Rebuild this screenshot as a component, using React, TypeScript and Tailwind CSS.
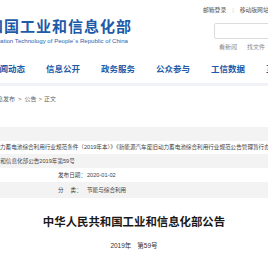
const cjk = "font-['Liberation_Sans','Noto_Sans_CJK_SC',sans-serif]";

const navItems = ["新闻动态", "信息公开", "政务服务", "公众参与", "工信数据", "互动交流"];

function InfoRow({
  gray,
  height,
  children,
}: {
  gray?: boolean;
  height: string;
  children?: React.ReactNode;
}) {
  return (
    <div
      className={`flex items-center whitespace-nowrap text-[5.6px] text-[#444] ${height} ${
        gray ? "bg-[#f3f3f3]" : "bg-white"
      }`}
    >
      {children}
    </div>
  );
}

export default function App() {
  return (
    <div className={`w-[268px] h-[273px] overflow-hidden bg-white ${cjk}`}>
      {/* header */}
      <header className="flex h-[54px]">
        <div className="w-[132px] shrink-0 pt-[19px]">
          <div className="flex justify-end whitespace-nowrap text-[15px] leading-[16px] font-bold tracking-[1px] text-[#1d5aa7]">
            中华人民共和国工业和信息化部
          </div>
          <div className="mt-[1.5px] flex justify-end pr-[4px] whitespace-nowrap text-[6.1px] leading-[8px] text-[#2a64ad]">
            Ministry of Industry and Information Technology of People´s Republic of China
          </div>
        </div>
        <div className="ml-[71px] flex-1 pt-[6px]">
          <div className="flex items-center whitespace-nowrap text-[5.8px] leading-[8px] text-[#555]">
            <span>邮箱登录</span>
            <span className="mx-[6px] text-[#ccc]">|</span>
            <span>移动版网站</span>
          </div>
          <div className="ml-[11px] mt-[9px] h-[16px] w-[80px] rounded-[2px] border border-[#dcdcdc] bg-white" />
          <div className="ml-[16px] mt-[4px] flex gap-[10px] whitespace-nowrap text-[6px] leading-[8px] text-[#888]">
            <span>看新闻</span>
            <span>找文件</span>
          </div>
        </div>
      </header>

      {/* nav */}
      <nav className="ml-[-9px] flex h-[29px] items-center gap-[21px] whitespace-nowrap">
        {navItems.map((item) => (
          <span
            key={item}
            className="w-[34px] shrink-0 text-[8.5px] leading-[10px] font-bold text-[#1d5aa7]"
          >
            {item}
          </span>
        ))}
      </nav>
      <div className="h-[3px] bg-[#f0f2f7]" />

      {/* breadcrumb */}
      <div className="ml-[-9px] mt-[9px] flex whitespace-nowrap text-[6px] leading-[8px] text-[#666]">
        <span>信息发布</span>
        <span className="px-[3px]">&gt;</span>
        <span>公告</span>
        <span className="px-[2px]">&gt;</span>
        <span>正文</span>
      </div>

      {/* info table */}
      <div className="mt-[24px]">
        <InfoRow gray height="h-[14px]" />
        <InfoRow height="h-[13px]">
          <span className="ml-[-5.6px]">
            动力蓄电池综合利用行业规范条件（2019年本）》《新能源汽车废旧动力蓄电池综合利用行业规范公告管理暂行办法》
          </span>
        </InfoRow>
        <InfoRow gray height="h-[14px]">
          <span className="ml-[-11px]">工业和信息化部公告2019年第59号</span>
        </InfoRow>
        <InfoRow height="h-[14px]">
          <span className="ml-[58px] w-[29px]">发布日期：</span>
          <span>2020-01-02</span>
        </InfoRow>
        <InfoRow gray height="h-[16px]">
          <span className="ml-[58px] flex w-[29px]">
            <span>分</span>
            <span className="ml-[7px]">类：</span>
          </span>
          <span>节能与综合利用</span>
        </InfoRow>
      </div>

      {/* title */}
      <h1 className="mt-[17px] text-center whitespace-nowrap text-[11.4px] leading-[14px] font-bold text-[#1a1a1a]">
        中华人民共和国工业和信息化部公告
      </h1>
      <div className="mt-[13px] flex justify-center gap-[6px] whitespace-nowrap text-[6.5px] leading-[8px] text-[#333]">
        <span>2019年</span>
        <span>第59号</span>
      </div>
    </div>
  );
}
